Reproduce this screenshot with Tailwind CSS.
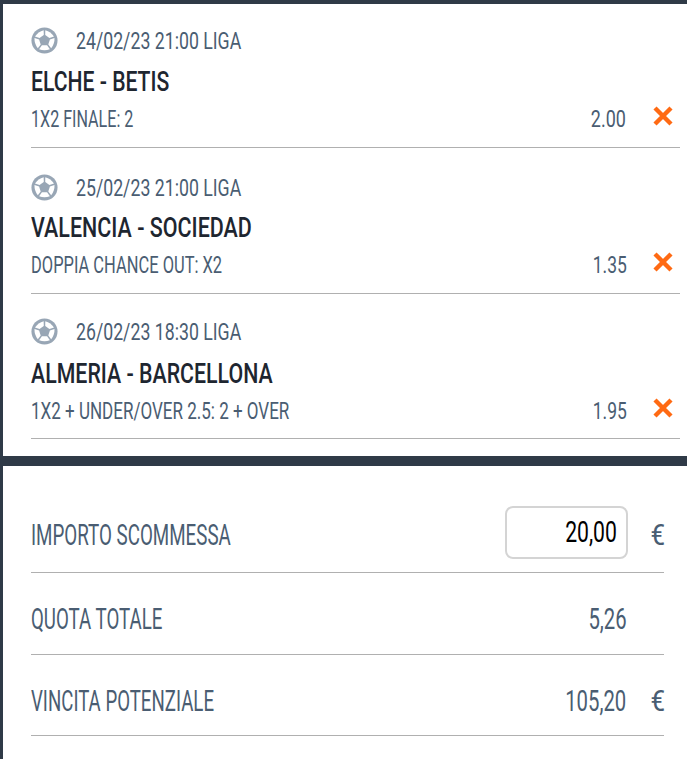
<!DOCTYPE html>
<html>

<head>
  <title>Schedina</title>
  <meta charset="UTF-8">
  <meta name="viewport" content="width=device-width, initial-scale=1.0">
  <script src="https://cdn.jsdelivr.net/npm/@tailwindcss/browser@4"></script>
</head>

<body class="bg-[#2f3a47] w-[687px] h-[759px] overflow-hidden font-['Roboto',sans-serif]">
  <!-- shared icons -->
  <svg class="hidden">
    <symbol id="ball" viewBox="0 0 24 24">
      <circle cx="12" cy="12" r="11.6" fill="#98a6b5" />
      <g fill="#fff">
        <path d="M9.7 16.3h4.6l2.5 3.5Q12 21.6 7.2 19.8z" />
        <path transform="rotate(72 12 12)" d="M9.7 16.3h4.6l2.5 3.5Q12 21.6 7.2 19.8z" />
        <path transform="rotate(144 12 12)" d="M9.7 16.3h4.6l2.5 3.5Q12 21.6 7.2 19.8z" />
        <path transform="rotate(216 12 12)" d="M9.7 16.3h4.6l2.5 3.5Q12 21.6 7.2 19.8z" />
        <path transform="rotate(288 12 12)" d="M9.7 16.3h4.6l2.5 3.5Q12 21.6 7.2 19.8z" />
      </g>
    </symbol>
  </svg>

  <div class="pl-[3px] pt-[4px]">
    <!-- selections -->
    <div class="bg-white h-[452px] pl-[28px] pr-[7px] pt-[22px]">

      <div class="h-[122px] border-b border-[#b0b0b0]">
        <div class="flex items-center h-[28px] pt-[2px] text-[#4a5d72] text-[23px] leading-none whitespace-nowrap">
          <svg class="w-[27px] h-[27px] mr-[18px] -mt-[2px] shrink-0"><use href="#ball" /></svg>
          <span class="inline-block origin-left scale-x-[0.77]">24/02/23 21:00 LIGA</span>
        </div>
        <div class="mt-[12px] text-[#1e2630] text-[28px] leading-[32px] font-medium whitespace-nowrap origin-left scale-x-[0.755]">ELCHE - BETIS</div>
        <div class="mt-[9px] flex items-center h-[24px] text-[#4a5d72] text-[23px] leading-none whitespace-nowrap">
          <span class="flex-1 origin-left scale-x-[0.7]">1X2 FINALE: 2</span>
          <span class="mr-[26px] origin-right scale-x-[0.78]">2.00</span>
          <svg class="w-[22px] h-[22px] mr-[6px] -mt-[6px]" viewBox="0 0 22 22">
            <path d="M3 3l16 16M19 3L3 19" stroke="#ff6a13" stroke-width="4.4" />
          </svg>
        </div>
      </div>

      <div class="h-[146px] pt-[25px] border-b border-[#b0b0b0]">
        <div class="flex items-center h-[28px] pt-[2px] text-[#4a5d72] text-[23px] leading-none whitespace-nowrap">
          <svg class="w-[27px] h-[27px] mr-[18px] -mt-[2px] shrink-0"><use href="#ball" /></svg>
          <span class="inline-block origin-left scale-x-[0.77]">25/02/23 21:00 LIGA</span>
        </div>
        <div class="mt-[11px] text-[#1e2630] text-[28px] leading-[32px] font-medium whitespace-nowrap origin-left scale-x-[0.767]">VALENCIA - SOCIEDAD</div>
        <div class="mt-[9px] flex items-center h-[24px] text-[#4a5d72] text-[23px] leading-none whitespace-nowrap">
          <span class="flex-1 origin-left scale-x-[0.716]">DOPPIA CHANCE OUT: X2</span>
          <span class="mr-[25px] origin-right scale-x-[0.76]">1.35</span>
          <svg class="w-[22px] h-[22px] mr-[6px] -mt-[6px]" viewBox="0 0 22 22">
            <path d="M3 3l16 16M19 3L3 19" stroke="#ff6a13" stroke-width="4.4" />
          </svg>
        </div>
      </div>

      <div class="h-[145px] pt-[23px] border-b border-[#b0b0b0]">
        <div class="flex items-center h-[28px] pt-[2px] text-[#4a5d72] text-[23px] leading-none whitespace-nowrap">
          <svg class="w-[27px] h-[27px] mr-[18px] -mt-[2px] shrink-0"><use href="#ball" /></svg>
          <span class="inline-block origin-left scale-x-[0.77]">26/02/23 18:30 LIGA</span>
        </div>
        <div class="mt-[13px] text-[#1e2630] text-[28px] leading-[32px] font-medium whitespace-nowrap origin-left scale-x-[0.762]">ALMERIA - BARCELLONA</div>
        <div class="mt-[9px] flex items-center h-[24px] text-[#4a5d72] text-[23px] leading-none whitespace-nowrap">
          <span class="flex-1 origin-left scale-x-[0.74]">1X2 + UNDER/OVER 2.5: 2 + OVER</span>
          <span class="mr-[25px] origin-right scale-x-[0.76]">1.95</span>
          <svg class="w-[22px] h-[22px] mr-[6px] -mt-[6px]" viewBox="0 0 22 22">
            <path d="M3 3l16 16M19 3L3 19" stroke="#ff6a13" stroke-width="4.4" />
          </svg>
        </div>
      </div>
    </div>

    <!-- totals -->
    <div class="mt-[10px] bg-white h-[293px] pl-[28px] pr-[23px] pt-[40px] text-[#4a5d72] text-[29px] leading-none whitespace-nowrap">
      <div class="flex items-center h-[67px] pb-[8px] border-b border-[#b0b0b0]">
        <span class="flex-1 origin-left scale-x-[0.647]">IMPORTO SCOMMESSA</span>
        <div class="w-[123px] h-[53px] mb-[6px] mr-[21px] border-2 border-[#d4d4d4] rounded-[8px] flex items-center justify-end pr-[9px] text-black">
          <span class="origin-right scale-x-[0.73]">20,00</span>
        </div>
        <span class="w-[15px] origin-right scale-x-[0.9]">€</span>
      </div>
      <div class="flex items-center h-[82px] pt-[12px] border-b border-[#b0b0b0]">
        <span class="flex-1 origin-left scale-x-[0.645]">QUOTA TOTALE</span>
        <span class="mr-[37px] origin-right scale-x-[0.7]">5,26</span>
      </div>
      <div class="flex items-center h-[81px] pt-[12px] border-b border-[#b0b0b0]">
        <span class="flex-1 origin-left scale-x-[0.643]">VINCITA POTENZIALE</span>
        <span class="mr-[23px] origin-right scale-x-[0.7]">105,20</span>
        <span class="w-[15px] origin-right scale-x-[0.9]">€</span>
      </div>
    </div>
  </div>
</body>

</html>
